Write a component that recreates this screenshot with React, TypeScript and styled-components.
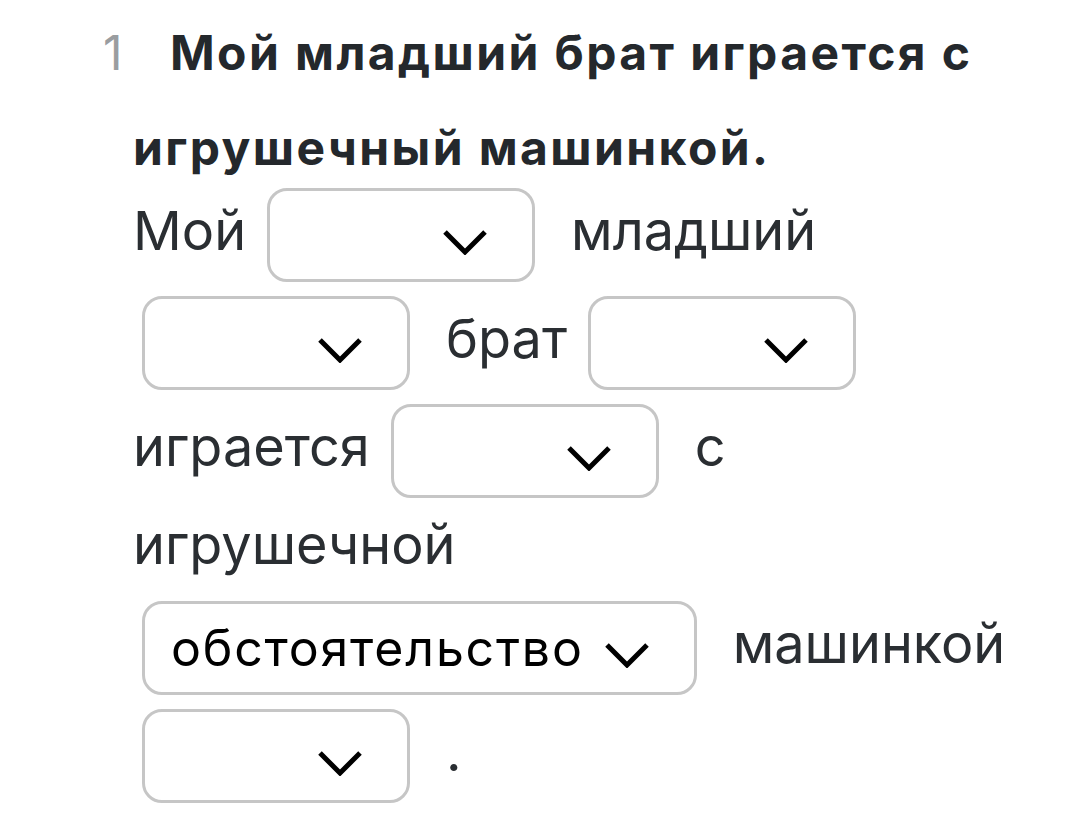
import React from 'react';
import styled, { createGlobalStyle } from 'styled-components';

const GlobalStyle = createGlobalStyle`
    body {
        margin: 0;
        background: #ffffff;
        font-family: Inter, 'Noto Sans', sans-serif;
    }
`;

const Page = styled.main`
    padding: 5px 0 0 133px;
    width: 887px;
`;

const Title = styled.h2`
    margin: 0;
    font-size: 48px;
    line-height: 95px;
    font-weight: 700;
    color: #24282c;
    letter-spacing: 2.4px;
`;

const Number = styled.span`
    display: inline-block;
    width: 67px;
    margin-left: -30px;
    font-weight: 400;
    letter-spacing: 0;
    color: #9a9da0;
`;

const Sentence = styled.div`
    display: flex;
    flex-wrap: wrap;
    align-items: center;
    column-gap: 12px;
    row-gap: 14px;
    margin-top: -7px;
`;

const Word = styled.span`
    font-size: 54px;
    line-height: 66px;
    padding-bottom: 9px;
    color: #2a2e32;
`;

const Select = styled.button<{ $filled?: boolean }>`
    display: flex;
    align-items: center;
    justify-content: ${(props) => (props.$filled ? 'flex-start' : 'flex-end')};
    gap: 20px;
    box-sizing: border-box;
    height: 94px;
    width: ${(props) => (props.$filled ? 'auto' : '268px')};
    margin: 0 24px 0 9px;
    padding: 0 44px 0 26px;
    border: 3px solid #c6c6c6;
    border-radius: 20px;
    background: #ffffff;
    font-family: inherit;
    font-size: 50px;
    letter-spacing: 1.8px;
    color: #000000;
    cursor: pointer;
`;

const Chevron = styled.svg`
    flex: none;
    margin-top: 13px;
`;

const Arrow = () => (
    <Chevron width="46" height="26" viewBox="0 0 46 26">
        <polyline
            points="3,3 23,23 43,3"
            fill="none"
            stroke="#000"
            strokeWidth="5"
        />
    </Chevron>
);

const Dropdown: React.FC<{ value?: string }> = ({ value }) => (
    <Select $filled={!!value}>
        {value && <span>{value}</span>}
        <Arrow />
    </Select>
);

const App: React.FC = () => {
    return (
        <Page>
            <GlobalStyle />
            <Title>
                <Number>1</Number>
                Мой младший брат играется с игрушечный машинкой.
            </Title>
            <Sentence>
                <Word>Мой</Word>
                <Dropdown />
                <Word>младший</Word>
                <Dropdown />
                <Word>брат</Word>
                <Dropdown />
                <Word>играется</Word>
                <Dropdown />
                <Word>с</Word>
                <Word>игрушечной</Word>
                <Dropdown value="обстоятельство" />
                <Word>машинкой</Word>
                <Dropdown />
                <Word>.</Word>
            </Sentence>
        </Page>
    );
};

export default App;
